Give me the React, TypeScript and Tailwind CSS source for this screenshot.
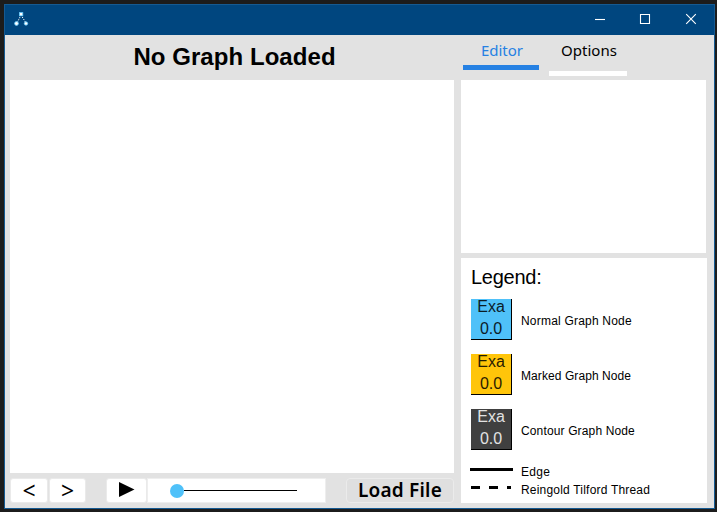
import React from "react";

type NodeRow = { label: string; box: string; tracking: string };

const nodes: NodeRow[] = [
  { label: "Normal Graph Node", box: "bg-[#4fc1f9] text-black", tracking: "tracking-[0.2px]" },
  { label: "Marked Graph Node", box: "bg-[#ffc50a] text-black", tracking: "tracking-[0.08px]" },
  { label: "Contour Graph Node", box: "bg-[#404040] text-white", tracking: "tracking-[0.14px]" },
];

const windowIcons = ["M4 7.5H14", "M3.5 2.5H12.5V11.5H3.5Z", "M3.2 2.2L12.8 11.8M12.8 2.2L3.2 11.8"];

function TitleBar() {
  return (
    <header className="flex h-[30px] shrink-0 items-center justify-between bg-[#00467f]">
      <svg width="16" height="16" viewBox="0 0 16 16" className="ml-[8px]">
        <path d="M8 3 L4 11 M8 3 L13 11" stroke="#fff" strokeWidth="1" strokeDasharray="1.2 1.2" fill="none" />
        <g fill="#fff" stroke="#65c9fa" strokeWidth="0.8">
          <rect x="6.4" y="0.6" width="3.4" height="3.2" />
          <circle cx="3.5" cy="11.5" r="1.9" />
          <circle cx="13" cy="11.5" r="1.7" />
        </g>
      </svg>
      <div className="flex h-full items-center text-white">
        {windowIcons.map((d) => (
          <span key={d} className="flex w-[46px] justify-center">
            <svg width="16" height="16" viewBox="0 0 16 16" fill="none" stroke="currentColor" strokeWidth="1.1">
              <path d={d} />
            </svg>
          </span>
        ))}
      </div>
    </header>
  );
}

function Legend() {
  return (
    <section className="mt-[5px] flex h-[245px] w-[246px] flex-col bg-white pl-[9px] pt-[5px] font-['Liberation_Sans',sans-serif] text-black">
      <h2 className="ml-px h-[36px] whitespace-nowrap text-[20px] leading-[28px] tracking-[-0.25px]">Legend:</h2>
      <div className="ml-px flex flex-col gap-[14px]">
        {nodes.map((n) => (
          <div key={n.label} className="flex h-[41px]">
            <div className={`w-[41px] overflow-hidden border-b border-r border-black text-center text-[16px] leading-[21px] ${n.box}`}>
              <div className="-mt-[3px] opacity-85">Exa</div>
              <div className="mt-px opacity-85">0.0</div>
            </div>
            <span className={`ml-[9px] mt-[14px] whitespace-nowrap text-[12px] leading-[16px] ${n.tracking}`}>{n.label}</span>
          </div>
        ))}
      </div>
      <div className="mt-[14px] flex h-[18px]">
        <div className="mt-[4px] h-[3px] w-[43px] bg-black" />
        <span className="ml-[8px] text-[12px] leading-[16px] tracking-[0.3px]">Edge</span>
      </div>
      <div className="flex h-[18px]">
        <div className="ml-px mt-[4px] flex h-[3px] w-[42px] gap-[9px]">
          <i className="w-[9px] bg-black" />
          <i className="w-[9px] bg-black" />
          <i className="w-[4px] bg-black" />
        </div>
        <span className="ml-[8px] whitespace-nowrap text-[12px] leading-[16px] tracking-[0.2px]">Reingold Tilford Thread</span>
      </div>
    </section>
  );
}

export default function App() {
  return (
    <div className="h-[512px] w-[717px] overflow-hidden bg-[#1c1c1c] pl-[4px] pt-[4px] font-['Noto_Sans',sans-serif] text-black">
      <div className="flex h-[505px] w-[711px] flex-col border border-[#155a92] bg-[#e2e2e2]">
        <TitleBar />
        <main className="flex flex-1 pl-[5px]">
          <div className="w-[444px]">
            <h1 className="h-[45px] whitespace-nowrap pl-[5px] text-center font-['Liberation_Sans',sans-serif] text-[24px] font-bold leading-[43px] tracking-[0.06px]">
              No Graph Loaded
            </h1>
            <div className="h-[393px] bg-white" />
            <div className="mt-[5px] flex h-[25px]">
              <button className="h-[25px] w-[38px] rounded-[3px] border border-[#eaeaea] bg-white text-[23px] leading-[23px]">&lt;</button>
              <button className="ml-px h-[25px] w-[37px] rounded-[3px] border border-[#eaeaea] bg-white text-[23px] leading-[23px]">&gt;</button>
              <button className="ml-[20px] flex h-[25px] w-[41px] items-start rounded-[3px] border border-[#eaeaea] bg-white pl-[12px] pt-[3px]">
                <svg width="16" height="16" viewBox="0 0 16 16"><path d="M0 0L15.5 7.5L0 15Z" /></svg>
              </button>
              <div className="flex w-[179px] items-center border border-[#eeeeee] bg-white pl-[22px]">
                <span className="size-[14px] rounded-full bg-[#4fc1f9]" />
                <span className="h-px w-[113px] bg-black" />
              </div>
              <button className="ml-[20px] h-[25px] w-[108px] whitespace-nowrap rounded-[4px] border border-[#ebebeb] bg-[#dfdfdf] text-[19px] font-semibold leading-[23px] tracking-[0.2px]">
                Load File
              </button>
            </div>
          </div>
          <div className="ml-[7px] w-[246px]">
            <div className="flex h-[45px] pl-[2px] text-center text-[15px] leading-[20px]">
              <div className="h-[35px] w-[76px] border-b-[5px] border-[#2681e3] pl-[2px] pt-[5px] text-[#2681e3]">Editor</div>
              <div className="ml-[10px] h-[41px] w-[78px] border-b-[5px] border-white pl-[2px] pt-[5px]">Options</div>
            </div>
            <div className="h-[173px] w-[245px] bg-white" />
            <Legend />
          </div>
        </main>
      </div>
    </div>
  );
}
